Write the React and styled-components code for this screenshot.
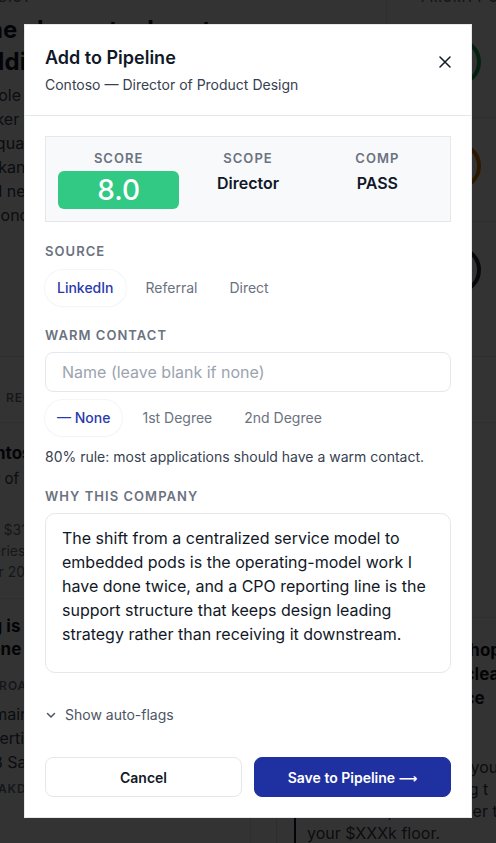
import React from 'react'
import styled, { createGlobalStyle } from 'styled-components'

const GlobalStyle = createGlobalStyle`
  * { box-sizing: border-box; }
  html, body { margin: 0; padding: 0; }
  body {
    font-family: Inter, "Noto Sans", sans-serif;
    color: #111827;
    background: #fff;
    overflow: hidden;
  }
`

/* ---------- page behind the dialog ---------- */

const Backdrop = styled.div`
  height: 100vh;
  overflow: hidden;
  margin-left: -28px;
`

const Scroller = styled.div`
  margin-top: -16px;
`

const TopSection = styled.section`
  display: grid;
  grid-template-columns: 414px 1fr;
  height: 373px;
  border-bottom: 1px solid #e5e7eb;
`

const VerdictCol = styled.div`
  padding: 6px 24px 0 0;
`

const Eyebrow = styled.div`
  font-size: 12px;
  line-height: 16px;
  font-weight: 600;
  letter-spacing: 0.08em;
  text-transform: uppercase;
  color: #6b7280;
  margin-top: ${p => p.$mt || 0}px;
  white-space: nowrap;
`

const Headline = styled.h2`
  margin: 8px 0 5px;
  font-size: 24px;
  line-height: 32px;
  font-weight: 700;
  color: #111827;
  white-space: nowrap;
`

const Lead = styled.p`
  margin: 0;
  font-size: 16px;
  line-height: 24px;
  color: #374151;
  white-space: nowrap;
`

const SidebarCol = styled.aside`
  border-left: 1px solid #e5e7eb;
  padding: 6px 0 0 34px;
`

const PriorityList = styled.div`
  margin-top: 8px;
`

const PriorityRow = styled.div`
  display: flex;
  align-items: flex-start;
  padding: 24px 0 31px 12px;
  border-bottom: 1px solid #e5e7eb;
  &:last-child { border-bottom: none; }
`

const Ring = styled.div`
  width: 48px;
  height: 48px;
  border-radius: 50%;
  border: 4px solid ${p => p.$tone};
  flex: none;
`

const TabBand = styled.div`
  height: 66px;
  padding: 33px 0 0 34px;
  border-bottom: 1px solid #e5e7eb;
`

const LowerGrid = styled.div`
  display: grid;
  grid-template-columns: 279px 1fr;
  column-gap: 25px;
  height: 500px;
`

const LeftCards = styled.div`
  border-right: 1px solid #e5e7eb;
`

const Card = styled.div`
  padding: ${p => p.$pad};
  border-bottom: ${p => (p.$divided ? '1px solid #e5e7eb' : 'none')};
`

const CardTitle = styled.div`
  font-size: 17px;
  line-height: ${p => p.$lh || 24}px;
  font-weight: 700;
  color: #111827;
  margin-top: ${p => p.$mt || 0}px;
  white-space: nowrap;
`

const CardText = styled.div`
  font-size: ${p => p.$size || 16}px;
  line-height: ${p => p.$lh || 24}px;
  color: ${p => (p.$muted ? '#6b7280' : '#374151')};
  margin-top: ${p => p.$mt || 0}px;
  white-space: nowrap;
`

const RightCol = styled.div`
  border-left: 1px solid #e5e7eb;
  padding-left: 17px;
`

const NoteCard = styled.div`
  height: 195px;
  border-bottom: 1px solid #e5e7eb;
  padding-top: 24px;
`

const Quote = styled.blockquote`
  margin: 46px 0 0;
  padding-left: 11px;
  border-left: 2px solid #111827;
  font-size: 16px;
  line-height: 22px;
  color: #374151;
  white-space: nowrap;
`

/* ---------- dialog ---------- */

const Overlay = styled.div`
  position: fixed;
  inset: 0;
  background: rgba(0, 0, 0, 0.8);
  display: flex;
  justify-content: center;
  align-items: flex-start;
  padding-top: 24px;
`

const Modal = styled.div`
  width: 448px;
  background: #fff;
  border: 1px solid #e5e7eb;
  display: flex;
  flex-direction: column;
`

const Header = styled.div`
  display: flex;
  justify-content: space-between;
  align-items: flex-start;
  padding: 20px;
  border-bottom: 1px solid #e5e7eb;
`

const Title = styled.h1`
  margin: 0;
  font-size: 18px;
  line-height: 26px;
  font-weight: 600;
  color: #111827;
`

const Subtitle = styled.p`
  margin: 4px 0 0;
  font-size: 14px;
  line-height: 20px;
  color: #374151;
`

const CloseButton = styled.button`
  width: 28px;
  height: 28px;
  margin: 3px -8px 0 0;
  padding: 0;
  border: none;
  background: transparent;
  color: #111827;
  display: flex;
  align-items: center;
  justify-content: center;
  cursor: pointer;
`

const Body = styled.div`
  padding: 20px;
  display: flex;
  flex-direction: column;
  gap: 20px;
`

const ScoreGrid = styled.div`
  display: grid;
  grid-template-columns: repeat(3, 1fr);
  gap: 8px;
  padding: 12px;
  background: #f8f9fb;
  border: 1px solid #e5e7eb;
`

const ScoreCell = styled.div`
  display: flex;
  flex-direction: column;
  align-items: center;
  gap: 4px;
`

const FieldLabel = styled.div`
  font-size: 13px;
  line-height: 18px;
  font-weight: 600;
  letter-spacing: 0.08em;
  text-transform: uppercase;
  color: #6b7280;
`

const ScoreBadge = styled.div`
  align-self: stretch;
  height: 38px;
  border-radius: 6px;
  background: #31c984;
  color: #fff;
  font-size: 28px;
  font-weight: 500;
  display: flex;
  align-items: center;
  justify-content: center;
`

const ScoreValue = styled.div`
  font-size: 16px;
  line-height: 24px;
  font-weight: 600;
  color: #111827;
`

const Section = styled.div`
  display: flex;
  flex-direction: column;
  gap: ${p => p.$gap || 8}px;
`

const PillRow = styled.div`
  display: flex;
  gap: 8px;
`

const Pill = styled.button`
  padding: 8px 12px;
  border: none;
  border-radius: 999px;
  font-family: inherit;
  font-size: 14px;
  line-height: 20px;
  font-weight: ${p => (p.$active ? 500 : 400)};
  color: ${p => (p.$active ? '#2a3aad' : '#6b7280')};
  background: ${p => (p.$active ? '#fff' : 'transparent')};
  box-shadow: ${p => (p.$active ? '0 0 0 1px #f4f5f7, 0 1px 2px rgba(16, 24, 40, 0.04)' : 'none')};
  cursor: pointer;
`

const TextInput = styled.input`
  height: 40px;
  padding: 0 16px;
  border: 1px solid #e5e7eb;
  border-radius: 8px;
  font-family: inherit;
  font-size: 16px;
  color: #111827;
  outline: none;
  &::placeholder { color: #9ca3af; }
`

const Hint = styled.p`
  margin: 3px 0 0;
  font-size: 14px;
  line-height: 20px;
  color: #374151;
`

const Reason = styled.textarea`
  width: 100%;
  height: 160px;
  padding: 12px 16px;
  border: 1px solid #e5e7eb;
  border-radius: 10px;
  font-family: inherit;
  font-size: 16px;
  line-height: 24px;
  color: #111827;
  resize: none;
  outline: none;
  overflow: hidden;
`

const Toggle = styled.button`
  align-self: flex-start;
  display: flex;
  align-items: center;
  gap: 8px;
  padding: 12px 0;
  border: none;
  background: transparent;
  font-family: inherit;
  font-size: 14px;
  line-height: 20px;
  color: #4b5563;
  cursor: pointer;
`

const Footer = styled.div`
  display: grid;
  grid-template-columns: 1fr 1fr;
  gap: 12px;
`

const ActionButton = styled.button`
  height: 40px;
  border-radius: 8px;
  font-family: inherit;
  font-size: 14px;
  font-weight: 600;
  cursor: pointer;
  border: 1px solid ${p => (p.$primary ? '#1f30a0' : '#e5e7eb')};
  background: ${p => (p.$primary ? '#1f30a0' : '#fff')};
  color: ${p => (p.$primary ? '#fff' : '#111827')};
`

const Arrow = styled.span`
  font-family: "DejaVu Sans", sans-serif;
  font-weight: 700;
  font-size: 13px;
`

const reason =
  'The shift from a centralized service model to\n' +
  'embedded pods is the operating-model work I\n' +
  'have done twice, and a CPO reporting line is the\n' +
  'support structure that keeps design leading\n' +
  'strategy rather than receiving it downstream.'

const sources = ['LinkedIn', 'Referral', 'Direct']
const degrees = ['— None', '1st Degree', '2nd Degree']

const CloseIcon = () => (
  <svg width="12" height="12" viewBox="0 0 12 12" fill="none" stroke="currentColor" strokeWidth="1.5" strokeLinecap="round">
    <path d="M1 1 L11 11 M11 1 L1 11" />
  </svg>
)

const ChevronIcon = () => (
  <svg width="12" height="12" viewBox="0 0 12 12" fill="none" stroke="currentColor" strokeWidth="1.5" strokeLinecap="round" strokeLinejoin="round">
    <path d="M2.5 4.5 L6 8 L9.5 4.5" />
  </svg>
)

const BackgroundPage = () => (
  <Backdrop>
    <Scroller>
      <TopSection>
        <VerdictCol>
          <Eyebrow>Verdict</Eyebrow>
          <Headline>The clearest role yet<br />Addition to the team</Headline>
          <Lead>
            At role scope, this is a maker-to-leader move<br />
            Maker track, with the team already in place<br />
            Disqualifier is the reporting line only<br />
            On kanban-style planning the team ships<br />
            And needs a design lead who can scale<br />
            Reconciles research with the roadmap
          </Lead>
        </VerdictCol>
        <SidebarCol>
          <Eyebrow>Priority check</Eyebrow>
          <PriorityList>
            <PriorityRow><Ring $tone="#16a34a" /></PriorityRow>
            <PriorityRow><Ring $tone="#d97706" /></PriorityRow>
            <PriorityRow><Ring $tone="#1f2937" /></PriorityRow>
          </PriorityList>
        </SidebarCol>
      </TopSection>
      <TabBand>
        <Eyebrow>Recent notes</Eyebrow>
      </TabBand>
      <LowerGrid>
        <LeftCards>
          <Card $pad="18px 0 16px 0" $divided>
            <CardTitle>Contoso</CardTitle>
            <CardText $size={15} $mt={2}>Mgr of Design</CardText>
            <CardText $size={14} $lh={21} $mt={28} $muted>ARR $310M<br />• Series D<br />Over 200 staff</CardText>
          </Card>
          <Card $pad="16px 0 0 0">
            <CardTitle $lh={23}>Org is flat and design<br />is one team</CardTitle>
            <Eyebrow $mt={17}>Approach</Eyebrow>
            <CardText $mt={8}>Domain work in<br />expertise<br />B2B SaaS</CardText>
            <Eyebrow $mt={7}>Breakdown</Eyebrow>
          </Card>
        </LeftCards>
        <RightCol>
          <NoteCard>
            <Eyebrow>Notes</Eyebrow>
          </NoteCard>
          <CardTitle $mt={20}>
            The scope is the real hope<br />story here: a path to clea<br />direct design influence
          </CardTitle>
          <Quote>
            Comp is not posted - you<br />
            best lever is anchoring t<br />
            the market, never under t<br />
            your $XXXk floor.
          </Quote>
        </RightCol>
      </LowerGrid>
    </Scroller>
  </Backdrop>
)

const App = () => {
  return (
    <>
      <GlobalStyle />
      <BackgroundPage />
      <Overlay>
        <Modal role="dialog" aria-label="Add to Pipeline">
          <Header>
            <div>
              <Title>Add to Pipeline</Title>
              <Subtitle>Contoso — Director of Product Design</Subtitle>
            </div>
            <CloseButton aria-label="Close"><CloseIcon /></CloseButton>
          </Header>
          <Body>
            <ScoreGrid>
              <ScoreCell>
                <FieldLabel>Score</FieldLabel>
                <ScoreBadge>8.0</ScoreBadge>
              </ScoreCell>
              <ScoreCell>
                <FieldLabel>Scope</FieldLabel>
                <ScoreValue>Director</ScoreValue>
              </ScoreCell>
              <ScoreCell>
                <FieldLabel>Comp</FieldLabel>
                <ScoreValue>PASS</ScoreValue>
              </ScoreCell>
            </ScoreGrid>

            <Section $gap={10}>
              <FieldLabel>Source</FieldLabel>
              <PillRow>
                {sources.map((s, i) => (
                  <Pill key={s} $active={i === 0}>{s}</Pill>
                ))}
              </PillRow>
            </Section>

            <Section>
              <FieldLabel>Warm contact</FieldLabel>
              <TextInput placeholder="Name (leave blank if none)" />
              <PillRow>
                {degrees.map((d, i) => (
                  <Pill key={d} $active={i === 0}>{d}</Pill>
                ))}
              </PillRow>
              <Hint>80% rule: most applications should have a warm contact.</Hint>
            </Section>

            <Section>
              <FieldLabel>Why this company</FieldLabel>
              <Reason defaultValue={reason} />
            </Section>

            <Toggle><ChevronIcon />Show auto-flags</Toggle>

            <Footer>
              <ActionButton>Cancel</ActionButton>
              <ActionButton $primary>Save to Pipeline <Arrow>⟶</Arrow></ActionButton>
            </Footer>
          </Body>
        </Modal>
      </Overlay>
    </>
  )
}

export default App
